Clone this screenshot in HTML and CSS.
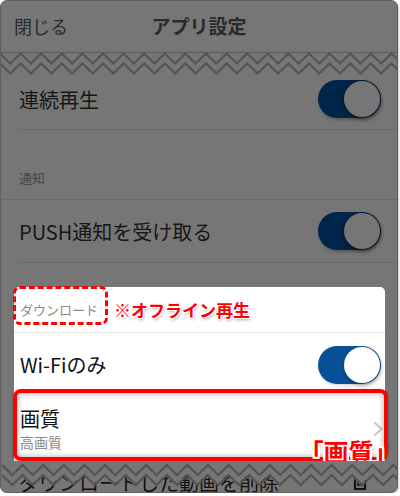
FILE: index.html
```html
<!DOCTYPE html>
<html lang="ja">
<head>
<meta charset="utf-8">
<title>アプリ設定</title>
<link rel="stylesheet" href="styles.css">
</head>
<body>
<div class="frame">
  <header class="nav">
    <span class="nav-close">閉じる</span>
    <span class="nav-title">アプリ設定</span>
    <span></span>
  </header>

  <svg class="tear" width="396" height="21" viewBox="0 0 396 21">
    <defs>
      <polyline id="zz" points="0,0 10.3,10 20.6,0 30.9,10 41.2,0 51.5,10 61.8,0 72.1,10 82.4,0 92.7,10 103,0 113.3,10 123.6,0 133.9,10 144.2,0 154.5,10 164.8,0 175.1,10 185.4,0 195.7,10 206,0 216.3,10 226.6,0 236.9,10 247.2,0 257.5,10 267.8,0 278.1,10 288.4,0 298.7,10 309,0 319.3,10 329.6,0 339.9,10 350.2,0 360.5,10 370.8,0 381.1,10 391.4,0 401.7,10" fill="none" stroke="#535353" stroke-width="2"/>
    </defs>
    <use href="#zz" x="-1" y="0.5"/>
    <use href="#zz" x="-1" y="10.5"/>
  </svg>

  <div class="row row-first">
    <span class="label">連続再生</span>
    <span class="toggle toggle-dim"><span class="knob"></span></span>
  </div>

  <div class="section-head">通知</div>

  <div class="row row-push">
    <span class="label">PUSH通知を受け取る</span>
    <span class="toggle toggle-dim"><span class="knob"></span></span>
  </div>

  <div class="card">
    <div class="card-head">
      <span class="head-box">ダウンロード</span>
      <span class="note">※オフライン再生</span>
    </div>
    <div class="card-row card-wifi">
      <span class="label">Wi-Fiのみ</span>
      <span class="toggle toggle-on"><span class="knob"></span></span>
    </div>
    <div class="card-row card-quality">
      <div class="q-text">
        <span class="q-title">画質</span>
        <span class="q-sub">高画質</span>
      </div>
      <svg class="chev" width="10" height="16" viewBox="0 0 10 16"><polyline points="1.5,1.5 8.5,8 1.5,14.5" fill="none" stroke="#c8c8cc" stroke-width="2"/></svg>
      <span class="highlight"></span>
      <span class="callout">「画質」</span>
    </div>
  </div>

  <div class="cut">
    <div class="cut-row">
      <span class="label">ダウンロードした動画を削除</span>
      <svg class="trash" width="14" height="20" viewBox="0 0 14 20"><path d="M2 4 V18 H12 V4 M5.5 7 V15 M8.5 7 V15" fill="none" stroke="#111" stroke-width="2.2"/></svg>
    </div>
    <svg class="tear-bottom" width="396" height="31" viewBox="0 0 396 31">
      <g transform="translate(-1,14)">
        <polygon points="0,0 10.3,10 20.6,0 30.9,10 41.2,0 51.5,10 61.8,0 72.1,10 82.4,0 92.7,10 103,0 113.3,10 123.6,0 133.9,10 144.2,0 154.5,10 164.8,0 175.1,10 185.4,0 195.7,10 206,0 216.3,10 226.6,0 236.9,10 247.2,0 257.5,10 267.8,0 278.1,10 288.4,0 298.7,10 309,0 319.3,10 329.6,0 339.9,10 350.2,0 360.5,10 370.8,0 381.1,10 391.4,0 401.7,10 401.7,-20 0,-20" fill="#767676"/>
      </g>
      <use href="#zz" x="1" y="4"/>
      <use href="#zz" x="1" y="14"/>
    </svg>
  </div>
</div>
</body>
</html>
```
FILE: styles.css
```css
body {
  margin: 0;
  background: #ffffff;
  font-family: "Noto Sans CJK JP", "Noto Sans", sans-serif;
}

.frame {
  width: 398px;
  height: 493px;
  box-sizing: border-box;
  border: 1px solid #5e5e5e;
  border-radius: 7px;
  background: #767676;
  overflow: hidden;
  box-shadow: 1px 1px 2px rgba(0, 0, 0, 0.2);
}

.nav {
  height: 52px;
  box-sizing: border-box;
  border-bottom: 1px solid #5a5a5a;
  display: grid;
  grid-template-columns: 1fr auto 1fr;
  align-items: center;
  padding: 0 13px 2px;
  color: #2a2a2a;
}

.nav-close {
  font-size: 18px;
}

.nav-title {
  font-size: 19px;
  font-weight: 600;
}

.tear {
  display: block;
  overflow: visible;
}

.row {
  margin-left: 18px;
  padding-right: 16px;
  display: flex;
  align-items: center;
  justify-content: space-between;
  border-bottom: 1px solid #6a6a6a;
  box-sizing: border-box;
  color: #161616;
  font-size: 20px;
}

.row-first {
  height: 56px;
  padding-bottom: 5px;
}

.row-push {
  height: 63px;
}

.section-head {
  height: 70px;
  box-sizing: border-box;
  border-bottom: 1px solid #6a6a6a;
  padding: 0 18px 13px;
  display: flex;
  align-items: flex-end;
  font-size: 13px;
  line-height: 16px;
  color: #454545;
}

.toggle {
  width: 63px;
  height: 38px;
  border-radius: 19px;
  box-sizing: border-box;
  padding: 1px;
  display: flex;
  justify-content: flex-end;
  flex: none;
}

.knob {
  width: 36px;
  height: 36px;
  border-radius: 50%;
}

.toggle-dim {
  background: #00254a;
  box-shadow: 1px 2px 3px rgba(0, 0, 0, 0.25);
}

.toggle-dim .knob {
  background: #767676;
  box-shadow: 0 0 0 1px rgba(0, 0, 0, 0.25), 0 2px 4px rgba(0, 0, 0, 0.4);
}

.toggle-on {
  background: #0a5099;
  box-shadow: 1px 2px 3px rgba(0, 0, 0, 0.15);
}

.toggle-on .knob {
  background: #ffffff;
  box-shadow: 0 2px 4px rgba(0, 0, 0, 0.3);
}

.card {
  margin: 24px 12px 0 13px;
  background: #ffffff;
  border-radius: 5px 5px 0 0;
}

.card-head {
  height: 46px;
  box-sizing: border-box;
  border-bottom: 1px solid #e4e4e4;
  display: flex;
  align-items: flex-start;
}

.head-box {
  height: 39px;
  box-sizing: border-box;
  margin: -1px 0 0 -1px;
  padding: 13px 7px 0 4px;
  border: 3px dashed #ff0000;
  border-radius: 7px;
  font-size: 13px;
  line-height: 16px;
  color: #8a8a8a;
}

.note {
  align-self: center;
  margin-left: 6px;
  font-size: 17px;
  font-weight: 700;
  color: #ff0000;
  text-shadow: 1px 0 0 #fff, -1px 0 0 #fff, 0 1px 0 #fff, 0 -1px 0 #fff,
    1px 1px 0 #fff, -1px -1px 0 #fff, 1px -1px 0 #fff, -1px 1px 0 #fff,
    1px 2px 3px rgba(0, 0, 0, 0.35);
}

.card-row {
  display: flex;
  align-items: center;
  justify-content: space-between;
  padding: 0 4px 0 6px;
  color: #111111;
}

.card-row .label {
  font-size: 20px;
}

.card-wifi {
  height: 63px;
}

.card-quality {
  height: 65px;
  position: relative;
  padding-right: 2px;
}

.q-text {
  display: flex;
  flex-direction: column;
}

.q-title {
  font-size: 20px;
  line-height: 24px;
}

.q-sub {
  margin-top: 2px;
  font-size: 14px;
  line-height: 18px;
  color: #8a8a8a;
}

.chev {
  display: block;
}

.highlight {
  position: absolute;
  top: -7px;
  left: -1px;
  right: -3px;
  bottom: 0;
  border: 4px solid #ff0000;
  border-radius: 8px;
  box-shadow: inset 0 0 6px rgba(0, 0, 0, 0.35), 0 1px 3px rgba(0, 0, 0, 0.3);
}

.callout {
  position: absolute;
  right: -1px;
  bottom: -4px;
  font-size: 25px;
  line-height: 28px;
  font-weight: 700;
  color: #ff0000;
  font-feature-settings: "palt";
  text-shadow: 2px 0 0 #fff, -2px 0 0 #fff, 0 2px 0 #fff, 0 -2px 0 #fff,
    1px 1px 0 #fff, -1px -1px 0 #fff, 1px -1px 0 #fff, -1px 1px 0 #fff,
    2px 2px 0 #fff, -2px -2px 0 #fff, 2px -2px 0 #fff, -2px 2px 0 #fff,
    1px 2px 4px rgba(0, 0, 0, 0.4);
}

.cut {
  position: relative;
  height: 31px;
  overflow: hidden;
}

.cut-row {
  margin-left: 18px;
  padding: 12px 30px 0 0;
  display: flex;
  align-items: flex-start;
  justify-content: space-between;
  color: #111111;
}

.cut-row .label {
  font-size: 20px;
  line-height: 20px;
}

.trash {
  display: block;
  margin-top: -2px;
}

.tear-bottom {
  position: absolute;
  left: 0;
  top: 0;
  overflow: visible;
}
```
